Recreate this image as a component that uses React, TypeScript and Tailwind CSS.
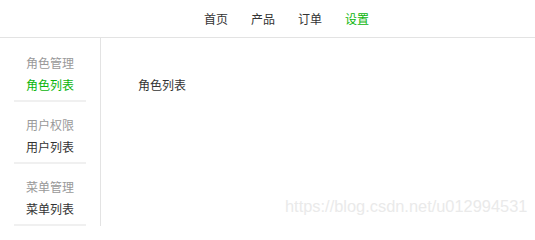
import React from 'react'

const cjk = { fontFamily: '"Noto Sans CJK SC", "Noto Sans", sans-serif' }

const navItems = ['首页', '产品', '订单', '设置']
const activeNav = '设置'

const groups = [
  { title: '角色管理', items: ['角色列表'] },
  { title: '用户权限', items: ['用户列表'] },
  { title: '菜单管理', items: ['菜单列表'] },
]
const activeItem = '角色列表'

export default function App() {
  return (
    <div className="relative w-[535px] h-[226px] bg-white overflow-hidden text-[12px]" style={cjk}>
      <div className="h-[38px] border-b border-[#e3e3e3] flex items-center pl-[204px] gap-[23px]">
        {navItems.map(n => (
          <span key={n} className={`leading-[22px] ${n === activeNav ? 'text-[#0bb50b]' : 'text-[#333]'}`}>
            {n}
          </span>
        ))}
      </div>

      <div className="flex h-[188px]">
        <div className="w-[101px] shrink-0 border-r border-[#e3e3e3] pt-[2px] flex flex-col items-center">
          {groups.map(g => (
            <div key={g.title} className="pt-3 flex flex-col items-center w-[72px]">
              <div className="leading-[22px] text-[#999]">{g.title}</div>
              {g.items.map(i => (
                <div key={i} className={`leading-[22px] ${i === activeItem ? 'text-[#0bb50b]' : 'text-[#333]'}`}>
                  {i}
                </div>
              ))}
              <div className="mt-1 h-[2px] w-full bg-[#f0f0f0]" />
            </div>
          ))}
        </div>

        <div className="flex-1 pl-[37px] pt-[36px]">
          <div className="leading-[22px] text-[#333]">角色列表</div>
        </div>
      </div>

      <div
        className="absolute left-[285px] top-[196px] text-[16.4px] text-[#eaeaea] leading-[20px]"
        style={{ fontFamily: '"Liberation Sans", Arial, sans-serif' }}
      >
        https://blog.csdn.net/u012994531
      </div>
    </div>
  )
}
